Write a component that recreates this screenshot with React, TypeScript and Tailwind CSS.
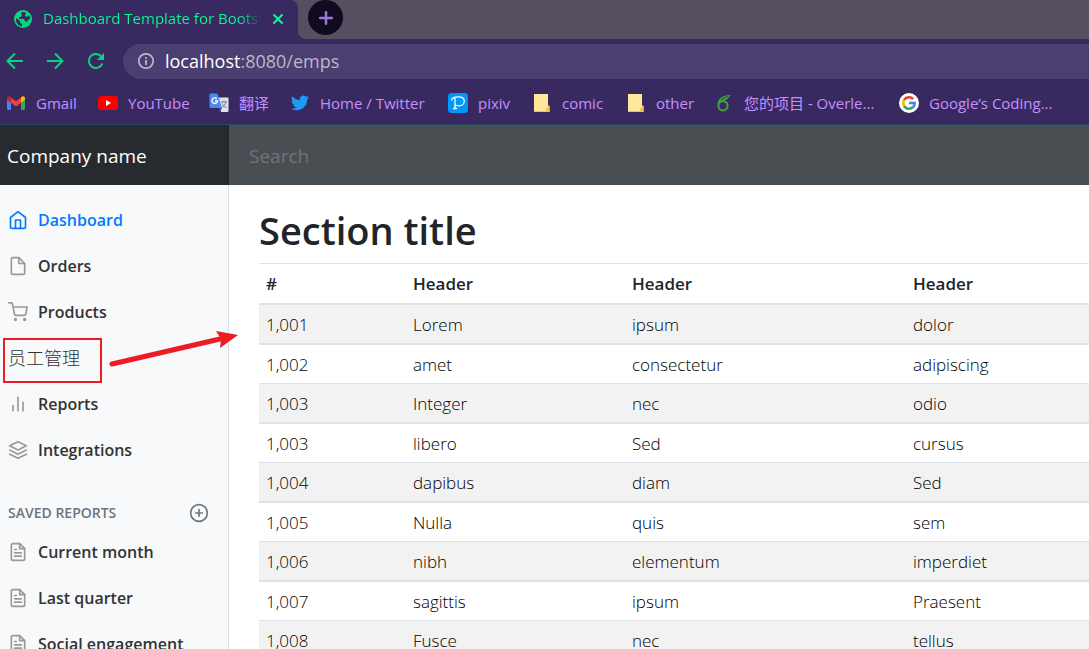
import type { ReactNode } from "react";
import { Plus, X } from "lucide-react";
import {
  FiBarChart2,
  FiFile,
  FiFileText,
  FiHome,
  FiLayers,
  FiPlusCircle,
  FiShoppingCart,
} from "react-icons/fi";

interface Bookmark {
  label: string;
  icon: ReactNode;
  width: string;
}

interface NavItem {
  label: string;
  icon?: ReactNode;
  active?: boolean;
}

function GlobeIcon() {
  return (
    <svg viewBox="0 0 18 18" className="size-[18px] shrink-0">
      <circle cx="9" cy="9" r="9" fill="#0bd47c" />
      <path
        d="M2 8l4 3v2l2 1v2.5A7.2 7.2 0 0 1 2 8zM8 2l-1 2 1 1-1 2H5v2h5l1 2 2 1 1-2 2-1a7 7 0 0 0-1-4l-2 2-2-1 1-3-2-1z"
        fill="#382a61"
      />
    </svg>
  );
}

function ReloadIcon() {
  return (
    <svg viewBox="0 0 20 20" className="size-5" fill="none">
      <path d="M16.4 12.5A7 7 0 1 1 15.6 6" stroke="#0bd47c" strokeWidth="2" />
      <path d="M18 2v7h-7z" fill="#0bd47c" />
    </svg>
  );
}

function ArrowIcon({ back }: { back?: boolean }) {
  return (
    <svg
      viewBox="0 0 18 18"
      className="size-[18px]"
      fill="none"
      stroke="#0bd47c"
      strokeWidth="2"
    >
      <path d={back ? "M17 9H2M9 1.5L1.5 9 9 16.5" : "M1 9h15M9 1.5L16.5 9 9 16.5"} />
    </svg>
  );
}

function InfoIcon() {
  return (
    <svg viewBox="0 0 18 18" className="size-[18px] shrink-0">
      <circle cx="9" cy="9" r="7.2" fill="none" stroke="#bdb7cb" strokeWidth="1.7" />
      <path d="M8.1 8h1.8v5H8.1zM8.1 5h1.8v1.8H8.1z" fill="#bdb7cb" />
    </svg>
  );
}

function GmailIcon() {
  return (
    <svg viewBox="0 0 18 14" className="h-[14px] w-[18px]">
      <path d="M0 2.5v10.3c0 .7.5 1.2 1.2 1.2H4V6z" fill="#4285f4" />
      <path d="M14 6v8h2.8c.7 0 1.2-.5 1.2-1.2V2.5z" fill="#34a853" />
      <path d="M4 1.4v5.3l5 3.8 5-3.8V1.4L9 5.2z" fill="#ea4335" />
      <path d="M0 2v1.8l4 3V1.4L3.2.7C1.9-.3 0 .5 0 2z" fill="#c5221f" />
      <path d="M18 2v1.8l-4 3V1.4l.8-.7C16.1-.3 18 .5 18 2z" fill="#fbbc04" />
    </svg>
  );
}

function YouTubeIcon() {
  return (
    <svg viewBox="0 0 20 14" className="h-[14px] w-5">
      <rect width="20" height="14" rx="3.5" fill="#f00" />
      <path d="M8 4l5 3-5 3z" fill="#fff" />
    </svg>
  );
}

function TranslateIcon() {
  return (
    <svg viewBox="0 0 20 20" className="size-5" fill="none">
      <path d="M8 4.5h10.5a1 1 0 0 1 1 1V18a1 1 0 0 1-1 1H12z" fill="#dfe2e6" />
      <path
        d="M12 9h6M15 7.5V9M17 9c-.8 2.6-2.5 4.5-4.5 5.5M13 10.5c1 1.8 2.5 3.2 4.5 4.2"
        stroke="#697f8b"
      />
      <path d="M1.5.5h7L13 15H1.5a1 1 0 0 1-1-1V1.5a1 1 0 0 1 1-1z" fill="#4a8af4" />
      <path d="M10 15h3l-2 4z" fill="#3256b0" />
      <path d="M7.8 5.8A2.8 2.8 0 1 0 8.5 8H6" stroke="#fff" strokeWidth="1.3" />
    </svg>
  );
}

function TwitterIcon() {
  return (
    <svg viewBox="0 0 24 24" className="size-[18px]" fill="#1d9bf0">
      <path d="M23.95 4.57a10 10 0 0 1-2.82.78 4.96 4.96 0 0 0 2.16-2.73c-.95.56-2 .96-3.13 1.19a4.92 4.92 0 0 0-8.39 4.48C7.69 8.1 4.07 6.13 1.64 3.16a4.92 4.92 0 0 0 1.52 6.57 4.9 4.9 0 0 1-2.23-.61v.06a4.92 4.92 0 0 0 3.95 4.83 5 5 0 0 1-2.21.08 4.94 4.94 0 0 0 4.6 3.42A9.87 9.87 0 0 1 0 19.54a13.99 13.99 0 0 0 7.55 2.21c9.05 0 14-7.5 14-13.98 0-.21 0-.42-.02-.63a9.9 9.9 0 0 0 2.46-2.55z" />
    </svg>
  );
}

function PixivIcon() {
  return (
    <svg viewBox="0 0 20 20" className="size-5" fill="none">
      <rect width="20" height="20" rx="3.5" fill="#0096fa" />
      <path
        d="M3.500 7.500C3.500 4.700 7 3.800 10.500 3.800c3.500 0 5.800 1.600 5.800 4.400s-2.500 4.600-5.600 4.600c-1.500 0-2.700-.4-3.700-1M7 4.800v10.700M5 15.500h4"
        stroke="#fff"
        strokeWidth="1.300"
      />
    </svg>
  );
}

function FolderIcon() {
  return (
    <svg viewBox="0 0 16 18" className="h-[18px] w-4">
      <path d="M0 0h14v12h1.5v6H0z" fill="#ffe79b" />
      <path d="M0 17h13v1H0zM14 11.5h1.5V18H12v-4h2z" fill="#eac54f" />
    </svg>
  );
}

function OverleafIcon() {
  return (
    <svg viewBox="0 0 16 18" className="h-[18px] w-4">
      <circle cx="7" cy="11.8" r="4.6" fill="none" stroke="#46a247" strokeWidth="2" />
      <path
        d="M1.5 11.5C1.5 5 6 1 15 1c-2 1-2.5 3.500-5 5C7.500 7 4.500 7 3 9.500z"
        fill="#46a247"
      />
      <path d="M5 6.200C7 4.200 9 3.200 11.500 2.500" fill="none" stroke="#382a61" />
    </svg>
  );
}

function GoogleIcon() {
  return (
    <svg viewBox="0 0 20 20" className="size-5">
      <circle cx="10" cy="10" r="10" fill="#fff" />
      <g fill="none" strokeWidth="2.6">
        <path d="M14.2 6A5.8 5.8 0 0 0 5 7.2" stroke="#ea4335" />
        <path d="M5.1 7a5.8 5.8 0 0 0 0 6" stroke="#fbbc05" />
        <path d="M5 12.9a5.8 5.8 0 0 0 8.8 1.4" stroke="#34a853" />
        <path d="M13.7 14.5A5.8 5.8 0 0 0 15.7 10H10" stroke="#4285f4" />
      </g>
    </svg>
  );
}

const bookmarks: Bookmark[] = [
  { label: "Gmail", icon: <GmailIcon />, width: "w-[92px]" },
  { label: "YouTube", icon: <YouTubeIcon />, width: "w-[111px]" },
  { label: "翻译", icon: <TranslateIcon />, width: "w-[81px]" },
  { label: "Home / Twitter", icon: <TwitterIcon />, width: "w-[158px]" },
  { label: "pixiv", icon: <PixivIcon />, width: "w-[84px]" },
  { label: "comic", icon: <FolderIcon />, width: "w-[94px]" },
  { label: "other", icon: <FolderIcon />, width: "w-[88px]" },
  { label: "您的项目 - Overle...", icon: <OverleafIcon />, width: "w-[185px]" },
  { label: "Google’s Coding...", icon: <GoogleIcon />, width: "w-[180px]" },
];

const navItems: NavItem[] = [
  { label: "Dashboard", icon: <FiHome size={20} />, active: true },
  { label: "Orders", icon: <FiFile size={20} /> },
  { label: "Products", icon: <FiShoppingCart size={20} /> },
  { label: "员工管理" },
  { label: "Reports", icon: <FiBarChart2 size={20} /> },
  { label: "Integrations", icon: <FiLayers size={20} /> },
];

const savedReports: NavItem[] = [
  { label: "Current month", icon: <FiFileText size={20} /> },
  { label: "Last quarter", icon: <FiFileText size={20} /> },
  { label: "Social engagement", icon: <FiFileText size={20} /> },
];

const rows = [
  ["1,001", "Lorem", "ipsum", "dolor"],
  ["1,002", "amet", "consectetur", "adipiscing"],
  ["1,003", "Integer", "nec", "odio"],
  ["1,003", "libero", "Sed", "cursus"],
  ["1,004", "dapibus", "diam", "Sed"],
  ["1,005", "Nulla", "quis", "sem"],
  ["1,006", "nibh", "elementum", "imperdiet"],
  ["1,007", "sagittis", "ipsum", "Praesent"],
  ["1,008", "Fusce", "nec", "tellus"],
];

function BrowserBar() {
  return (
    <header className="border-b border-[#254a66] bg-[#382a61]">
      <div className="flex h-[39px] bg-[#554f60]">
        <div className="flex w-[298px] shrink-0 items-center rounded-tr-lg bg-[#382a61] pb-0.5 pl-3.5">
          <GlobeIcon />
          <span className="ml-[11px] w-[218px] overflow-hidden bg-linear-to-r from-[#0df793] from-90% to-transparent bg-clip-text text-[15px] whitespace-nowrap text-transparent">
            Dashboard Template for Bootstrap
          </span>
          <button aria-label="Close tab" className="ml-[9px] text-[#0df793]">
            <X size={16} strokeWidth={3} />
          </button>
        </div>
        <div className="flex-1 bg-[#382a61]">
          <div className="flex h-full rounded-bl-lg bg-[#554f60] pl-2.5">
            <button
              aria-label="New tab"
              className="flex size-[35px] items-center justify-center rounded-full bg-[#100b20] text-[#9d74d3]"
            >
              <Plus size={20} strokeWidth={3} />
            </button>
          </div>
        </div>
      </div>
      <div className="flex h-11 items-center pl-1.5">
        <button aria-label="Back" className="w-10">
          <ArrowIcon back />
        </button>
        <button aria-label="Forward" className="w-10">
          <ArrowIcon />
        </button>
        <button aria-label="Reload" className="w-[37px]">
          <ReloadIcon />
        </button>
        <div className="flex h-[35px] flex-1 items-center rounded-l-full bg-[#4b3e71] pl-3.5">
          <InfoIcon />
          <span className="ml-2.5 text-lg leading-6 text-[#bdb7cb]">
            <span className="text-white">localhost</span>:8080/emps
          </span>
        </div>
      </div>
      <nav className="flex h-[41px] overflow-hidden pb-0.5 pl-1.5">
        {bookmarks.map((item) => (
          <a
            key={item.label}
            href="#"
            className={`flex shrink-0 items-center gap-2.5 text-[15px] leading-6 whitespace-nowrap text-[#c58fff] ${item.width}`}
          >
            <span className="flex w-5 shrink-0 justify-center">{item.icon}</span>
            {item.label}
          </a>
        ))}
      </nav>
    </header>
  );
}

function NavLink({ label, icon, active }: NavItem) {
  return (
    <li>
      <a
        href="#"
        className={`flex h-[46px] items-center gap-2.5 leading-6 whitespace-nowrap ${
          active ? "text-[#007bff]" : "text-[#333]"
        } ${icon ? "text-base font-semibold" : "text-[18px] font-light"}`}
      >
        {icon && <span className={active ? "" : "text-[#999]"}>{icon}</span>}
        {icon ? (
          label
        ) : (
          <span className="relative">
            {label}
            {/* Red frame and arrow drawn over the link */}
            <span className="absolute -top-2 -left-[5px] h-[45px] w-[99px] border-2 border-[#ed1c24]" />
            <svg
              viewBox="0 0 130 50"
              className="absolute -top-4 left-[100px] z-10 h-[50px] w-[130px]"
            >
              <path d="M4 34L112 9" stroke="#ed1c24" strokeWidth="5" strokeLinecap="round" />
              <path d="M130 5l-22-4 5 8-1 9z" fill="#ed1c24" />
            </svg>
          </span>
        )}
      </a>
    </li>
  );
}

function Sidebar() {
  return (
    <aside className="w-[229px] shrink-0 border-r border-[#dcdfe2] bg-[#f8f9fb] pt-3 pl-2">
      <ul>
        {navItems.map((item) => (
          <NavLink key={item.label} {...item} />
        ))}
      </ul>
      <div className="mt-6 flex h-8 items-center justify-between pr-[19px] text-[#6c757d]">
        <h2 className="text-sm font-semibold">SAVED REPORTS</h2>
        <button aria-label="Add report">
          <FiPlusCircle size={20} />
        </button>
      </div>
      <ul>
        {savedReports.map((item) => (
          <NavLink key={item.label} {...item} />
        ))}
      </ul>
    </aside>
  );
}

function DataTable() {
  return (
    <table className="w-full table-fixed border-separate border-spacing-0 text-left text-[17px] leading-6 whitespace-nowrap text-[#212529]">
      <thead>
        <tr className="h-10 *:border-t *:border-[#dee2e6] *:pl-[7px] *:font-semibold">
          <th className="w-[147px]">#</th>
          <th className="w-[219px]">Header</th>
          <th className="w-[281px]">Header</th>
          <th>Header</th>
        </tr>
      </thead>
      <tbody className="font-light text-black">
        {rows.map((row, idx) => (
          <tr
            key={idx}
            className={
              idx === 0 || idx % 2 === 1
                ? "h-10 odd:bg-[#f2f2f2] *:border-t-2"
                : "h-[39px] bg-[#f2f2f2] *:border-t"
            }
          >
            {row.map((cell, i) => (
              <td key={i} className="border-[#dee2e6] pt-0.5 pl-[7px]">
                {cell}
              </td>
            ))}
          </tr>
        ))}
      </tbody>
    </table>
  );
}

export default function App() {
  return (
    <div className="flex h-screen flex-col overflow-hidden bg-white font-['Open_Sans','Noto_Sans_CJK_SC',sans-serif]">
      <BrowserBar />
      <div className="flex h-[60px] shrink-0 bg-[#494e52]">
        <a
          href="#"
          className="flex w-[229px] items-center border-r border-[#212529] bg-[#272b2f] pt-0.5 pl-[7px] text-[19px] text-white"
        >
          Company name
        </a>
        <input
          type="text"
          aria-label="Search"
          placeholder="Search"
          className="min-w-0 flex-1 px-5 pt-0.5 text-[19px] text-white outline-none placeholder:text-[#6c757d]"
        />
      </div>
      <div className="flex min-h-0 flex-1">
        <Sidebar />
        <main className="min-w-0 flex-1 overflow-hidden pt-5 pl-[30px]">
          <h1 className="mb-2 text-[38px] leading-[50px] font-semibold text-[#212529]">
            Section title
          </h1>
          <DataTable />
        </main>
      </div>
    </div>
  );
}
